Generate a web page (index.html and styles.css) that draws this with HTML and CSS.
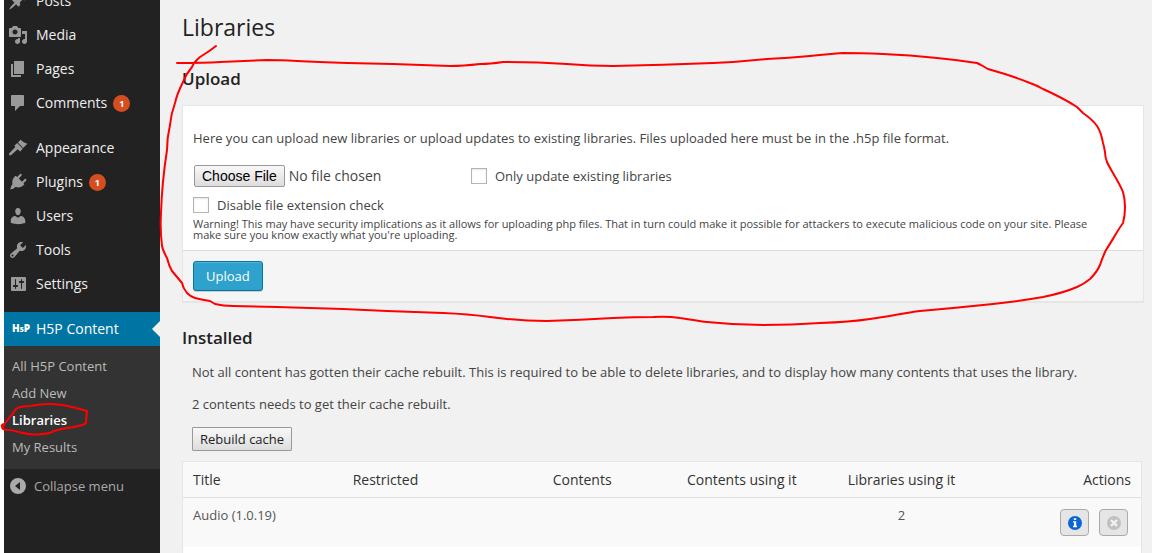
FILE: index.html
```html
<!DOCTYPE html>
<html lang="en-US">
<head>
  <meta charset="UTF-8">
  <title>Libraries</title>
  <meta name="viewport" content="width=device-width, initial-scale=1">
  <link rel="stylesheet" href="styles.css">
</head>
<body>
  <div class="wrap">
    <nav class="sidebar">
      <ul class="menu">
        <li><a href="#">
          <svg class="icon" viewBox="0 0 20 20"><path d="M10.44 3.02l1.82-1.82 6.36 6.35-1.83 1.82c-1.05-.68-2.48-.57-3.41.36l-.75.75c-.92.93-1.04 2.35-.35 3.41l-1.83 1.82-2.41-2.41-2.8 2.79c-.42.42-3.38 2.71-3.8 2.29s1.86-3.39 2.28-3.81l2.79-2.79L4.1 9.36l1.83-1.82c1.05.69 2.48.57 3.4-.36l.75-.75c.93-.92 1.05-2.35.36-3.41z"/></svg>
          Posts</a></li>
        <li><a href="#">
          <svg class="icon" viewBox="0 0 20 20"><path d="M13 11V4c0-.55-.45-1-1-1h-1.67L9 1H5L3.67 3H2c-.55 0-1 .45-1 1v7c0 .55.45 1 1 1h10c.55 0 1-.45 1-1zM7 4.5c1.38 0 2.5 1.12 2.5 2.5S8.38 9.5 7 9.5 4.5 8.38 4.5 7 5.62 4.5 7 4.5zM14 6h5v10.5c0 1.38-1.12 2.5-2.5 2.5S14 17.88 14 16.5s1.12-2.5 2.5-2.5c.17 0 .34.02.5.05V9h-3V6zm-4 8.05V13h2v3.5c0 1.38-1.12 2.5-2.5 2.5S7 17.88 7 16.5 8.12 14 9.5 14c.17 0 .34.02.5.05z"/></svg>
          Media</a></li>
        <li><a href="#">
          <svg class="icon" viewBox="0 0 20 20"><path d="M6 15V2h10v13H6zm-1 1h8v2H3V5h2v11z"/></svg>
          Pages</a></li>
        <li><a href="#">
          <svg class="icon" viewBox="0 0 20 20"><path d="M4 2h11c.6 0 1 .4 1 1v9c0 .6-.4 1-1 1h-3l-5 5v-5H4c-.6 0-1-.4-1-1V3c0-.6.4-1 1-1z"/></svg>
          Comments <span class="count">1</span></a></li>
        <li class="group"><a href="#">
          <svg class="icon" viewBox="0 0 20 20"><path d="M12.6 1.8c2 1.900 4.200 3.200 6.800 4l-4.300 4.300-5.200-5.600zM9.200 4.900l5.600 5.800-2.700 2.700-2.400-2.200-6.500 5.900c-1.200 1-2.900-.6-1.900-1.900l6-6.200-1-1.200z"/></svg>
          Appearance</a></li>
        <li><a href="#">
          <svg class="icon" viewBox="0 0 20 20"><path d="M12 2c.9-.9 2.500.6 1.600 1.600L10.800 6.500 14 9.700l2.700-2.700c.9-.9 2.500.6 1.600 1.600l-2.800 2.700.9 1-1 1c-2.300 2.300-5 2.600-7.900 1.800L5.300 16.800l-3 .8.700-3 1.400-2.300C3.900 9.400 4.600 6.600 6.700 4.600l.9-.9 1.700 1.200z"/></svg>
          Plugins <span class="count">1</span></a></li>
        <li><a href="#">
          <svg class="icon" viewBox="0 0 20 20"><path d="M10 9.250c-2.270 0-2.730-3.440-2.730-3.440C7 4.020 7.820 2 9.970 2c2.160 0 2.980 2.020 2.710 3.810 0 0-.41 3.440-2.680 3.440zm0 2.570L12.720 10c2.390 0 4.520 2.330 4.520 4.530v2.490s-3.650 1.130-7.240 1.130c-3.650 0-7.240-1.130-7.240-1.130v-2.490c0-2.250 1.940-4.480 4.470-4.480z"/></svg>
          Users</a></li>
        <li><a href="#">
          <svg class="icon" viewBox="0 0 20 20"><path d="M16.680 9.770c-1.340 1.340-3.300 1.670-4.950.99l-5.410 6.520c-.99.99-2.590.99-3.580 0s-.99-2.590 0-3.570l6.520-5.420c-.68-1.650-.35-3.610.99-4.950 1.280-1.280 3.120-1.620 4.720-1.060l-2.890 2.890 2.820 2.820 2.860-2.870c.53 1.580.18 3.390-1.080 4.650zM3.810 16.210c.4.390 1.040.39 1.430 0 .4-.4.4-1.040 0-1.430-.39-.4-1.030-.4-1.430 0-.39.390-.39 1.030 0 1.430z"/></svg>
          Tools</a></li>
        <li><a href="#">
          <svg class="icon" viewBox="0 0 20 20"><path d="M18 16V4c0-.55-.45-1-1-1H4c-.55 0-1 .45-1 1v12c0 .55.45 1 1 1h13c.55 0 1-.45 1-1zM8 11h1c.55 0 1 .45 1 1s-.45 1-1 1H8v1.500c0 .28-.22.5-.5.5s-.5-.22-.5-.5V13H6c-.55 0-1-.45-1-1s.45-1 1-1h1V5.500c0-.28.22-.5.5-.5s.5.22.5.5V11zm5-2h-1c-.55 0-1-.45-1-1s.45-1 1-1h1V5.500c0-.28.22-.5.5-.5s.5.22.5.5V7h1c.55 0 1 .45 1 1s-.45 1-1 1h-1v5.500c0 .28-.22.5-.5.5s-.5-.22-.5-.5V9z"/></svg>
          Settings</a></li>
        <li class="group current"><a href="#">
          <span class="h5p-logo">H<small>5</small>P</span>
          H5P Content</a></li>
      </ul>
      <ul class="submenu">
        <li><a href="#">All H5P Content</a></li>
        <li><a href="#">Add New</a></li>
        <li><a href="#" class="active">Libraries</a></li>
        <li><a href="#">My Results</a></li>
      </ul>
      <button type="button" class="collapse">
        <svg class="icon" viewBox="0 0 20 20"><path fill-rule="evenodd" d="M10 2a8 8 0 1 0 0 16 8 8 0 0 0 0-16zM12 6v8l-5-4z"/></svg>
        Collapse menu
      </button>
    </nav>

    <main class="content">
      <h1>Libraries</h1>

      <h2>Upload</h2>
      <form class="panel">
        <div class="panel-body">
          <p>Here you can upload new libraries or upload updates to existing libraries. Files uploaded here must be in the .h5p file format.</p>
          <div class="file-row">
            <input type="file" class="file" aria-label="Library file">
            <label class="check"><input type="checkbox"> Only update existing libraries</label>
          </div>
          <label class="check"><input type="checkbox"> Disable file extension check</label>
          <div class="warning">Warning! This may have security implications as it allows for uploading php files. That in turn could make it possible for attackers to execute malicious code on your site. Please make sure you know exactly what you're uploading.</div>
        </div>
        <div class="panel-footer">
          <button type="button" class="primary">Upload</button>
        </div>
      </form>

      <h2>Installed</h2>
      <div class="notice">
        <p>Not all content has gotten their cache rebuilt. This is required to be able to delete libraries, and to display how many contents that uses the library.</p>
        <p>2 contents needs to get their cache rebuilt.</p>
        <button type="button" class="rebuild">Rebuild cache</button>
      </div>
      <table class="libraries">
        <thead>
          <tr>
            <th class="left">Title</th>
            <th class="left">Restricted</th>
            <th>Contents</th>
            <th>Contents using it</th>
            <th>Libraries using it</th>
            <th class="right">Actions</th>
          </tr>
        </thead>
        <tbody>
          <tr>
            <td class="left">Audio (1.0.19)</td>
            <td></td>
            <td></td>
            <td></td>
            <td>2</td>
            <td>
              <div class="actions">
                <button type="button" aria-label="View details">
                  <svg viewBox="0 0 14 14"><circle cx="7" cy="7" r="7" fill="#0a67d3"/><path fill="#fff" d="M5.800 2.200h2.400v1.900H5.800zM5 5.200h3.200v4.600H9v1.400H5V9.800h1V6.600H5z"/></svg>
                </button>
                <button type="button" aria-label="Delete" disabled>
                  <svg viewBox="0 0 14 14"><circle cx="7" cy="7" r="7" fill="#c0c0c0"/><path stroke="#f2f2f2" stroke-width="2.400" d="M4 4l6 6M10 4l-6 6"/></svg>
                </button>
              </div>
            </td>
          </tr>
          <tr>
            <td></td>
            <td></td>
            <td></td>
            <td></td>
            <td></td>
            <td></td>
          </tr>
        </tbody>
      </table>
    </main>
  </div>

  <!-- red pen marks -->
  <svg class="marks" width="1152" height="553" viewBox="0 0 1152 553">
    <path d="M216 46C211 50 205 54 200 57Q194 62 192 67Q186 74 183 82Q177 94 175 103Q171 114 170 125Q167 138 167 150Q162 182 161 213Q160 230 162 246Q163 251 167 258Q169 266 172 271Q177 277 182 283Q183 288 187 293Q191 297 195 298Q203 300 210 301L215 304Q223 306 233 306L277 307L343 309L387 311L443 313Q468 314 490 317L507 319Q527 321 547 321Q580 320 613 318Q634 317 653 317Q667 316 680 318C688 319 698 321 707 322Q735 325 763 325Q792 325 820 323Q850 322 870 319C888 317 903 313 920 311Q955 308 993 304Q1020 301 1043 297Q1063 293 1077 287Q1084 284 1090 279Q1097 272 1100 265Q1103 256 1106 250C1112 241 1119 228 1123 223Q1125 216 1125 207Q1125 199 1123 192C1119 182 1110 169 1107 162Q1105 157 1105 152Q1104 146 1103 143Q1101 132 1097 126Q1093 120 1083 113L1077 107Q1063 98 1043 89Q1036 85 1030 83Q1013 76 988 69L981 65L977 63Q958 60 937 58Q910 55 883 54Q860 53 843 53Q830 54 810 56Q789 58 767 59Q740 62 713 63Q663 65 613 66Q590 66 567 64Q536 62 503 62Q490 64 480 64Q463 66 450 66Q422 65 393 64L347 63Q317 62 297 61Q280 60 267 60Q243 61 220 62Q205 63 177 63"/>
    <path d="M5 424Q1 424 2 427Q2 430 8 430C14 430 17 432 23 433Q35 436 50 433C55 430 60 429 67 428Q76 427 82 425Q86 424 86 422L87 411Q80 409 72 407Q60 404 50 404Q40 404 30 406Q20 406 16 409Q14 411 12 415C9 416 8 421 5 423Q4 425 3 428"/>
  </svg>
</body>
</html>
```
FILE: styles.css
```css
* {
  box-sizing: border-box;
}
html {
  overflow: hidden;
}
body {
  margin: 0;
  height: 100vh;
  overflow: hidden;
  position: relative;
  background: #f1f1f1;
  color: #444;
  font-family: "Open Sans", sans-serif;
  font-size: 13px;
  line-height: 20px;
}
button, input {
  font-family: inherit;
}
ul {
  list-style: none;
  margin: 0;
  padding: 0;
}
p {
  margin: 0;
}
.wrap {
  display: flex;
  min-height: 100vh;
  border-left: 4px solid #fff;
}

/* sidebar */
.sidebar {
  flex: 0 0 156px;
  background: #222;
}
.menu {
  margin-top: -16px;
}
.menu a {
  display: flex;
  align-items: center;
  height: 34px;
  padding-left: 4px;
  gap: 8px;
  color: #eee;
  font-size: 14px;
  text-decoration: none;
}
.icon {
  flex: none;
  width: 20px;
  height: 20px;
  fill: #999;
}
.group {
  margin-top: 11px;
}
.count {
  width: 17px;
  height: 17px;
  margin-left: -2px;
  border-radius: 50%;
  background: #d54e21;
  color: #fff;
  font-size: 9px;
  font-weight: 700;
  line-height: 17px;
  text-align: center;
}
.current {
  position: relative;
}
.current a {
  background: #0074a2;
  color: #fff;
}
.current::after {
  content: "";
  position: absolute;
  right: 0;
  top: 9px;
  border: 8px solid transparent;
  border-left-width: 0;
  border-right-color: #f1f1f1;
}
.h5p-logo {
  width: 20px;
  padding-left: 4px;
  font-size: 10px;
  font-weight: 800;
  line-height: 12px;
  white-space: nowrap;
}
.h5p-logo small {
  font-size: 7px;
}
.submenu {
  padding: 7px 0 8px;
  background: #333;
}
.submenu a {
  display: block;
  padding-left: 8px;
  color: #bbb;
  line-height: 27px;
  text-decoration: none;
}
.submenu .active {
  color: #fff;
  font-weight: 600;
}
.collapse {
  display: flex;
  align-items: center;
  gap: 6px;
  width: 100%;
  height: 34px;
  padding: 0 4px;
  border: 0;
  background: none;
  color: #aaa;
  font-size: 13px;
  cursor: pointer;
}
.collapse .icon {
  fill: #aaa;
}

/* content */
.content {
  flex: 1;
  min-width: 0;
  padding: 11px 8px 0 22px;
}
h1 {
  margin: 0;
  color: #222;
  font-size: 23px;
  font-weight: 400;
  line-height: 32px;
}
h2 {
  margin: 24px 0 13px;
  color: #222;
  font-size: 17px;
  font-weight: 600;
  line-height: 23px;
}
.panel {
  margin-top: 15px;
  border: 1px solid #e5e5e5;
  background: #fff;
  box-shadow: 0 1px 1px rgba(0, 0, 0, .04);
}
.panel-body {
  padding: 22px 10px 10px;
}
.file-row {
  display: flex;
  align-items: center;
  margin: 17px 0 8px;
}
.file {
  width: 278px;
  padding-left: 1px;
  color: #444;
  font-size: 14px;
}
.file::file-selector-button {
  height: 22px;
  padding: 0 7px;
  border: 1px solid #999;
  border-radius: 2px;
  background: linear-gradient(#f8f8f8, #ddd);
  color: #000;
  font-family: "Liberation Sans", Arial, sans-serif;
  font-size: 14px;
}
.check {
  display: flex;
  align-items: center;
  gap: 8px;
}
.check input {
  appearance: none;
  width: 16px;
  height: 16px;
  margin: 0;
  border: 1px solid #b4b4b4;
  background: #fff;
  box-shadow: inset 0 1px 2px rgba(0, 0, 0, .1);
}
.warning {
  margin-top: 3px;
  padding-right: 22px;
  font-size: 11px;
  line-height: 11px;
}
.panel-footer {
  padding: 10px;
  border-top: 1px solid #ddd;
  background: #f5f5f5;
}
.primary {
  display: block;
  height: 30px;
  padding: 0 12px;
  border: 1px solid #0074a2;
  border-radius: 3px;
  background: #2ea2cc;
  box-shadow: inset 0 1px 0 rgba(120, 200, 230, .5), 0 1px 0 rgba(0, 0, 0, .15);
  color: #fff;
  font-size: 13px;
}
.notice {
  padding: 0 10px;
}
.notice p {
  margin-bottom: 12px;
}
.rebuild {
  display: block;
  height: 24px;
  margin: 13px 0 10px;
  padding: 0 7px;
  border: 1px solid #999;
  border-radius: 1px;
  background: linear-gradient(#f8f8f8, #ddd);
  color: #222;
  font-size: 13px;
}

/* library list */
.libraries {
  width: calc(100% - 2px);
  table-layout: fixed;
  border: 1px solid #e5e5e5;
  border-collapse: separate;
  border-spacing: 0;
  background: #fff;
}
.libraries th {
  padding: 8px 10px 7px;
  border-bottom: 1px solid #e1e1e1;
  background: #f9f9f9;
  color: #333;
  font-size: 14px;
  font-weight: 400;
}
.libraries td {
  height: 49px;
  padding: 7px 10px;
  color: #555;
  text-align: center;
  vertical-align: top;
}
.libraries tbody tr:nth-child(odd) {
  background: #f9f9f9;
}
.libraries .left {
  text-align: left;
}
.libraries .right {
  text-align: right;
}
.actions {
  display: flex;
  justify-content: flex-end;
  gap: 10px;
  padding: 4px 3px 0 0;
}
.actions button {
  display: flex;
  align-items: center;
  justify-content: center;
  width: 29px;
  height: 27px;
  padding: 0;
  border: 1px solid #aaa;
  border-radius: 4px;
  background: #e5e5e5;
}
.actions svg {
  width: 14px;
  height: 14px;
}
.marks {
  position: absolute;
  top: 0;
  left: 0;
  fill: none;
  stroke: #f00;
  stroke-width: 2;
  stroke-linecap: round;
  stroke-linejoin: round;
  pointer-events: none;
}
```
